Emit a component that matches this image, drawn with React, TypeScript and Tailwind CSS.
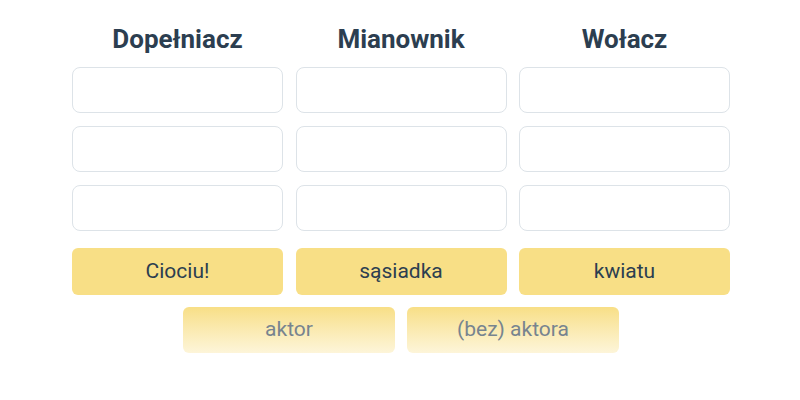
const columns = ['Dopełniacz', 'Mianownik', 'Wołacz'];
const answers = ['Ciociu!', 'sąsiadka', 'kwiatu'];
const leftovers = ['aktor', '(bez) aktora'];

export default function App() {
  return (
    <div className="min-h-[400px] w-[800px] bg-white font-['Roboto',sans-serif] pt-[22px]">
      <div className="ml-[72px] grid w-[658px] grid-cols-3 gap-x-[12.5px]">
        {columns.map((name) => (
          <div key={name} className="flex flex-col gap-[13px]">
            <h2 className="h-[32px] text-center text-[26px] font-bold leading-[35px] text-[#2c3e50]">
              {name}
            </h2>
            {[0, 1, 2].map((i) => (
              <div
                key={i}
                className="h-[46px] rounded-[8px] border border-[#dde3e8] bg-white"
              />
            ))}
          </div>
        ))}
      </div>

      <div className="ml-[72px] mt-[17px] grid w-[658px] grid-cols-3 gap-x-[12.5px]">
        {answers.map((word) => (
          <button
            key={word}
            className="flex h-[47px] items-center justify-center rounded-[6px] bg-[#f8df86] text-[21px] text-[#2c3e50]"
          >
            {word}
          </button>
        ))}
      </div>

      <div className="ml-[183px] mt-[12px] flex gap-x-[12px]">
        {leftovers.map((word) => (
          <button
            key={word}
            className="flex h-[46px] w-[212px] items-center justify-center rounded-[6px] bg-gradient-to-b from-[#f8df86] to-[#fdf5d9] text-[21px] text-[#77848f]"
          >
            {word}
          </button>
        ))}
      </div>
    </div>
  );
}
